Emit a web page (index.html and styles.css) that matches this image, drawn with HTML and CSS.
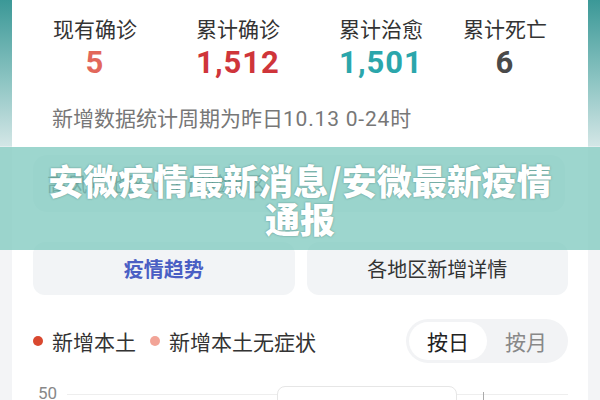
FILE: index.html
```html
<!DOCTYPE html>
<html lang="zh-CN">
<head>
    <meta charset="UTF-8">
    <meta name="viewport" content="width=device-width, initial-scale=1.0">
    <title>安微疫情最新消息</title>
    <link rel="stylesheet" href="styles.css">
</head>
<body>
    <div class="card">
        <div class="stats">
            <div class="stat">
                <div class="stat-label">现有确诊</div>
                <div class="stat-num num-now">5</div>
            </div>
            <div class="stat">
                <div class="stat-label">累计确诊</div>
                <div class="stat-num num-total">1,512</div>
            </div>
            <div class="stat">
                <div class="stat-label">累计治愈</div>
                <div class="stat-num num-cured">1,501</div>
            </div>
            <div class="stat">
                <div class="stat-label">累计死亡</div>
                <div class="stat-num num-dead">6</div>
            </div>
        </div>
        <p class="period">新增数据统计周期为昨日<span class="digits">10.13 0-24</span>时</p>

        <div class="risk">高风险地区 <span class="risk-num">0</span> 中风险地区 <span class="risk-num warn">0</span></div>

        <div class="tabs">
            <div class="tab active">疫情趋势</div>
            <div class="tab">各地区新增详情</div>
        </div>

        <div class="legend-row">
            <div class="legend">
                <span class="dot dot-local"></span>新增本土
                <span class="dot dot-silent"></span>新增本土无症状
            </div>
            <div class="toggle">
                <span class="toggle-item on">按日</span>
                <span class="toggle-item">按月</span>
            </div>
        </div>

        <div class="chart">
            <span class="axis-label">50</span>
            <div class="grid-line"></div>
            <div class="tip"></div>
            <span class="tick"></span>
        </div>
    </div>

    <div class="banner">
        <h1>安微疫情最新消息/安微最新疫情<br>通报</h1>
    </div>
</body>
</html>
```

FILE: styles.css
```css
body {
    margin: 0;
    height: 400px;
    overflow: hidden;
    padding: 0 12px;
    background: linear-gradient(to bottom, #3b9897 0, #8cc4c2 80px, #d3e6e6 146px, #f3f4f6 147px);
    font-family: "Noto Sans CJK SC", "Noto Sans", sans-serif;
    color: #333;
}

.card {
    background: #fff;
    min-height: 420px;
    padding-top: 13px;
}

/* top figures */
.stats {
    display: grid;
    grid-template-columns: 143px 143px 124px 86px;
    padding-left: 40px;
}

.stat {
    width: 86px;
    text-align: center;
}

.stat-label {
    font-size: 21px;
    line-height: 30px;
    color: #333;
}

.stat-num {
    font-family: Roboto, "Liberation Sans", sans-serif;
    font-weight: 700;
    font-size: 31px;
    line-height: 40px;
    letter-spacing: 1px;
    margin: 0 -10px;
}

.num-now { color: #e2675b; }
.num-total { color: #cf353a; }
.num-cured { color: #2ba6ab; }
.num-dead { color: #4a4a4a; }

.period {
    margin: 19px 0 0 40px;
    font-size: 21px;
    line-height: 30px;
    color: #777;
}

.digits {
    font-family: Roboto, "Liberation Sans", sans-serif;
    letter-spacing: 0.8px;
}

/* row sitting under the banner */
.risk {
    margin: 21px 23px 0 21px;
    height: 57px;
    line-height: 57px;
    padding-left: 14px;
    border-radius: 14px;
    background: #f2f4f6;
    font-size: 20px;
    color: #555;
}

.risk-num { color: #d43; }
.risk-num.warn { color: #e9a23b; }

.tabs {
    display: flex;
    gap: 12px;
    margin: 30px 20px 0 21px;
}

.tab {
    flex: 1;
    height: 53px;
    line-height: 53px;
    border-radius: 12px;
    background: #f2f4f6;
    text-align: center;
    font-size: 20px;
    color: #333;
}

.tab.active {
    color: #4a5fc4;
    font-weight: 700;
}

.legend-row {
    display: flex;
    justify-content: space-between;
    align-items: center;
    margin: 24px 20px 0 21px;
}

.legend {
    display: flex;
    align-items: center;
    font-size: 21px;
    color: #333;
}

.dot {
    width: 10px;
    height: 10px;
    border-radius: 50%;
    margin: 0 9px 0 0;
}

.dot-local { background: #d9482f; }
.dot-silent { background: #f2a497; margin-left: 14px; }

.toggle {
    display: flex;
    padding: 3px;
    border-radius: 22px;
    background: #f2f3f5;
}

.toggle-item {
    width: 78px;
    height: 38px;
    line-height: 38px;
    text-align: center;
    border-radius: 19px;
    font-size: 21px;
    color: #888;
}

.toggle-item.on {
    background: #fff;
    color: #222;
}

/* chart head */
.chart {
    position: relative;
    height: 40px;
    margin: 10px 20px 0 26px;
}

.axis-label {
    position: absolute;
    left: 0;
    top: 10px;
    font-family: Roboto, "Liberation Sans", sans-serif;
    font-size: 17px;
    line-height: 20px;
    color: #888;
}

.grid-line {
    position: absolute;
    left: 29px;
    right: 0;
    top: 21px;
    border-top: 1px solid #eee;
}

.tip {
    position: absolute;
    left: 239px;
    top: 13px;
    width: 178px;
    height: 60px;
    background: #fff;
    border: 1px solid #e6e6e6;
    border-radius: 8px;
}

.tick {
    position: absolute;
    left: 445px;
    top: 19px;
    width: 1px;
    height: 10px;
    background: #aaa;
}

/* headline laid over the page */
.banner {
    position: absolute;
    left: 0;
    top: 147px;
    width: 600px;
    height: 103px;
    background: rgba(130, 202, 192, 0.78);
    display: flex;
    align-items: center;
    justify-content: center;
}

.banner h1 {
    margin: 0;
    text-align: center;
    font-size: 35px;
    line-height: 38px;
    font-weight: 900;
    color: #fff;
    text-shadow: 0 0 2px rgba(40, 90, 85, 0.6);
}
```
